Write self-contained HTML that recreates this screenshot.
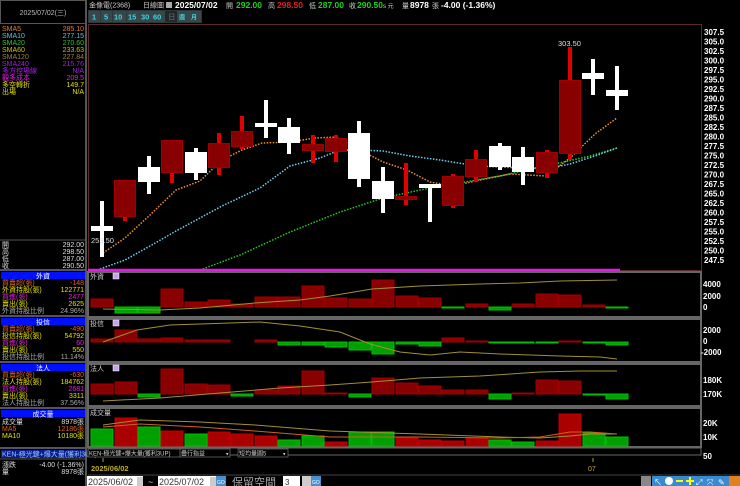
<!DOCTYPE html>
<html><head><meta charset="utf-8"><style>
body{margin:0;background:#000;width:740px;height:486px;overflow:hidden}
svg{display:block}
text{font-family:"Liberation Sans","Noto Sans CJK TC",sans-serif}
.s{font-size:7px}
.ax{font-size:8px;fill:#fff;font-weight:bold}
</style></head><body>
<svg width="740" height="486" viewBox="0 0 740 486" xmlns="http://www.w3.org/2000/svg">
<rect width="740" height="486" fill="#000"/>
<!-- left panel borders -->
<rect x="0.5" y="0.5" width="85" height="23" fill="none" stroke="#555"/>
<text x="43" y="15" class="s" fill="#bbb" text-anchor="middle">2025/07/02(三)</text>
<line x1="86" y1="0" x2="86" y2="486" stroke="#555" stroke-width="2"/>
<g class="s">
<text x="2" y="31" fill="#e08030">SMA5</text><text x="84" y="31" fill="#e08030" text-anchor="end">285.10</text>
<text x="2" y="38" fill="#60c0e0">SMA10</text><text x="84" y="38" fill="#60c0e0" text-anchor="end">277.15</text>
<text x="2" y="45" fill="#30c030">SMA20</text><text x="84" y="45" fill="#30c030" text-anchor="end">270.60</text>
<text x="2" y="52" fill="#d0c000">SMA60</text><text x="84" y="52" fill="#d0c000" text-anchor="end">233.63</text>
<text x="2" y="59" fill="#a08040">SMA120</text><text x="84" y="59" fill="#a08040" text-anchor="end">227.84</text>
<text x="2" y="66" fill="#a020d0">SMA240</text><text x="84" y="66" fill="#a020d0" text-anchor="end">215.76</text>
<text x="2" y="73" fill="#a020e0">多方控場線</text><text x="84" y="73" fill="#a020e0" text-anchor="end">N/A</text>
<text x="2" y="80" fill="#e020e0">觀多成本</text><text x="84" y="80" fill="#e020e0" text-anchor="end">209.5</text>
<text x="2" y="87" fill="#e0e000">多空轉折</text><text x="84" y="87" fill="#e0e000" text-anchor="end">149.7</text>
<text x="2" y="94" fill="#e0e000">出場</text><text x="84" y="94" fill="#e0e000" text-anchor="end">N/A</text>
</g>
<line x1="0" y1="240" x2="86" y2="240" stroke="#555"/>
<g class="s" fill="#ddd">
<text x="2" y="247">開</text><text x="84" y="247" text-anchor="end">292.00</text>
<text x="2" y="254">高</text><text x="84" y="254" text-anchor="end">298.50</text>
<text x="2" y="261">低</text><text x="84" y="261" text-anchor="end">287.00</text>
<text x="2" y="268">收</text><text x="84" y="268" text-anchor="end">290.50</text>
</g>
<line x1="0" y1="270" x2="86" y2="270" stroke="#555" stroke-width="2"/>
<!-- 外資 -->
<rect x="1" y="272" width="84" height="7" fill="#0010ff"/><text x="43" y="278.5" class="s" fill="#fff" text-anchor="middle">外資</text>
<g class="s">
<text x="2" y="285" fill="#e06020">買賣超(張)</text><text x="84" y="285" fill="#e06020" text-anchor="end">-148</text>
<text x="2" y="292" fill="#e0e000">外資持股(張)</text><text x="84" y="292" fill="#e0e000" text-anchor="end">122771</text>
<text x="2" y="299" fill="#e020e0">買進(張)</text><text x="84" y="299" fill="#e020e0" text-anchor="end">2477</text>
<text x="2" y="306" fill="#e0e000">賣出(張)</text><text x="84" y="306" fill="#e0e000" text-anchor="end">2625</text>
<text x="2" y="313" fill="#aaa">外資持股比例</text><text x="84" y="313" fill="#aaa" text-anchor="end">24.96%</text>
</g>
<line x1="0" y1="316" x2="86" y2="316" stroke="#555" stroke-width="2"/>
<rect x="1" y="318" width="84" height="7" fill="#0010ff"/><text x="43" y="324.5" class="s" fill="#fff" text-anchor="middle">投信</text>
<g class="s">
<text x="2" y="331" fill="#e06020">買賣超(張)</text><text x="84" y="331" fill="#e06020" text-anchor="end">-490</text>
<text x="2" y="338" fill="#e0e000">投信持股(張)</text><text x="84" y="338" fill="#e0e000" text-anchor="end">54792</text>
<text x="2" y="345" fill="#e020e0">買進(張)</text><text x="84" y="345" fill="#e020e0" text-anchor="end">60</text>
<text x="2" y="352" fill="#e0e000">賣出(張)</text><text x="84" y="352" fill="#e0e000" text-anchor="end">550</text>
<text x="2" y="359" fill="#aaa">投信持股比例</text><text x="84" y="359" fill="#aaa" text-anchor="end">11.14%</text>
</g>
<line x1="0" y1="362" x2="86" y2="362" stroke="#555" stroke-width="2"/>
<rect x="1" y="364" width="84" height="7" fill="#0010ff"/><text x="43" y="370.5" class="s" fill="#fff" text-anchor="middle">法人</text>
<g class="s">
<text x="2" y="377" fill="#e06020">買賣超(張)</text><text x="84" y="377" fill="#e06020" text-anchor="end">-630</text>
<text x="2" y="384" fill="#e0e000">法人持股(張)</text><text x="84" y="384" fill="#e0e000" text-anchor="end">184762</text>
<text x="2" y="391" fill="#e020e0">買進(張)</text><text x="84" y="391" fill="#e020e0" text-anchor="end">2681</text>
<text x="2" y="398" fill="#e0e000">賣出(張)</text><text x="84" y="398" fill="#e0e000" text-anchor="end">3311</text>
<text x="2" y="405" fill="#aaa">法人持股比例</text><text x="84" y="405" fill="#aaa" text-anchor="end">37.56%</text>
</g>
<line x1="0" y1="408" x2="86" y2="408" stroke="#555" stroke-width="2"/>
<rect x="1" y="410" width="84" height="7" fill="#0010ff"/><text x="43" y="416.5" class="s" fill="#fff" text-anchor="middle">成交量</text>
<g class="s">
<text x="2" y="424" fill="#ddd">成交量</text><text x="84" y="424" fill="#ddd" text-anchor="end">8978張</text>
<text x="2" y="431" fill="#e06020">MA5</text><text x="84" y="431" fill="#e06020" text-anchor="end">12186張</text>
<text x="2" y="438" fill="#e0e000">MA10</text><text x="84" y="438" fill="#e0e000" text-anchor="end">10180張</text>
</g>
<line x1="0" y1="448" x2="86" y2="448" stroke="#555" stroke-width="2"/>
<rect x="1" y="450" width="84" height="8" fill="#0a1a90"/><text x="2" y="456.5" class="s" fill="#9cf">KEN-極光鍵+爆大量(獲利3UP)</text>
<line x1="0" y1="459" x2="86" y2="459" stroke="#555"/>
<g class="s" fill="#ddd">
<text x="2" y="467">漲跌</text><text x="84" y="467" text-anchor="end">-4.00 (-1.36%)</text>
<text x="2" y="474">量</text><text x="84" y="474" text-anchor="end">8978張</text>
</g>

<!-- top bar -->
<text x="89" y="7.5" font-size="7" fill="#ccc">金像電(2368)</text>
<text x="143" y="7.5" font-size="7" fill="#ccc">日線圖</text>
<rect x="166" y="2" width="6" height="6" fill="#aaa"/>
<text x="175" y="8" font-size="8.5" font-weight="bold" fill="#fff">2025/07/02</text>
<text x="226" y="8" font-size="7" fill="#ccc">開</text><text x="236" y="8" font-size="8.5" font-weight="bold" fill="#20d020">292.00</text>
<text x="268" y="8" font-size="7" fill="#ccc">高</text><text x="277" y="8" font-size="8.5" font-weight="bold" fill="#e02020">298.50</text>
<text x="309" y="8" font-size="7" fill="#ccc">低</text><text x="318" y="8" font-size="8.5" font-weight="bold" fill="#20d020">287.00</text>
<text x="349" y="8" font-size="7" fill="#ccc">收</text><text x="357" y="8" font-size="8.5" font-weight="bold" fill="#20d020">290.50</text>
<text x="383" y="8" font-size="6" fill="#ccc">s 元</text>
<text x="402" y="8" font-size="7" fill="#ccc">量</text><text x="410" y="8" font-size="8.5" font-weight="bold" fill="#fff">8978</text>
<text x="432" y="8" font-size="7" fill="#ccc">張</text><text x="441" y="8" font-size="8.5" font-weight="bold" fill="#fff">-4.00 (-1.36%)</text>
<!-- buttons -->
<rect x="88" y="10" width="114" height="13" fill="#2a3a3a"/>
<g font-size="7.5" font-weight="bold" fill="#40d0e0">
<rect x="89" y="11" width="11" height="11" fill="#38484a"/><text x="92" y="19.5">1</text>
<rect x="101" y="11" width="11" height="11" fill="#38484a"/><text x="104" y="19.5">5</text>
<rect x="113" y="11" width="13" height="11" fill="#38484a"/><text x="114" y="19.5">10</text>
<rect x="127" y="11" width="13" height="11" fill="#38484a"/><text x="128" y="19.5">15</text>
<rect x="140" y="11" width="12" height="11" fill="#38484a"/><text x="141" y="19.5">30</text>
<rect x="152" y="11" width="13" height="11" fill="#38484a"/><text x="153" y="19.5">60</text>
<rect x="165" y="11" width="12" height="11" fill="#202828"/><text x="168" y="19.5" fill="#556">日</text>
<rect x="177" y="11" width="12" height="11" fill="#38484a"/><text x="179" y="19.5" font-size="6">週</text>
<rect x="189" y="11" width="12" height="11" fill="#38484a"/><text x="191" y="19.5" font-size="6">月</text>
</g>

<!-- main chart frame -->
<rect x="88.5" y="24.5" width="613" height="246" fill="none" stroke="#5a2a2a"/>
<g class="ax">
<text x="704" y="35">307.5</text><text x="704" y="44.5">305.0</text><text x="704" y="54">302.5</text><text x="704" y="63.5">300.0</text>
<text x="704" y="73">297.5</text><text x="704" y="82.5">295.0</text><text x="704" y="92">292.5</text><text x="704" y="101.5">290.0</text>
<text x="704" y="111">287.5</text><text x="704" y="120.5">285.0</text><text x="704" y="130">282.5</text><text x="704" y="139.5">280.0</text>
<text x="704" y="149">277.5</text><text x="704" y="158.5">275.0</text><text x="704" y="168">272.5</text><text x="704" y="177.5">270.0</text>
<text x="704" y="187">267.5</text><text x="704" y="196.5">265.0</text><text x="704" y="206">262.5</text><text x="704" y="215.5">260.0</text>
<text x="704" y="225">257.5</text><text x="704" y="234.5">255.0</text><text x="704" y="244">252.5</text><text x="704" y="253.5">250.0</text>
<text x="704" y="263">247.5</text>
</g>
<!-- MA lines -->
<polyline fill="none" stroke="#2c2" stroke-width="1.5" stroke-dasharray="1.5,1.5" points="200,270 240,255 290,232 340,212 383,198 420,190 453,184 500,176 546,166 590,156 617,148"/>
<polyline fill="none" stroke="#6cd0f0" stroke-width="1.5" stroke-dasharray="1.5,1.5" points="100,269 125,260 150,246 176,231 200,218 222,206 260,188 290,166 320,158 340,150 360,150 383,151 410,156 440,160 477,166 523,168 550,168 570,164 595,156 617,148"/>
<polyline fill="none" stroke="#f09030" stroke-width="1.5" stroke-dasharray="1.5,1.5" points="103,253 125,238 150,215 176,190 200,181 222,160 242,150 262,143 290,142 315,138 336,137 360,150 383,162 407,170 430,182 453,186 480,180 510,174 546,176 570,158 595,134 617,118"/>
<line x1="88" y1="270" x2="620" y2="270" stroke="#e020e0" stroke-width="2.5"/>
<!-- candles -->
<g fill="#fff">
<rect x="100" y="201" width="4" height="56"/><rect x="91" y="226" width="22" height="5"/>
<rect x="147" y="156" width="4" height="38"/><rect x="138" y="167" width="22" height="15"/>
<rect x="194" y="148" width="4" height="32"/><rect x="185" y="152" width="22" height="21"/>
<rect x="264" y="100" width="4" height="38"/><rect x="255" y="123" width="22" height="4"/>
<rect x="287" y="118" width="4" height="36"/><rect x="278" y="127" width="22" height="16"/>
<rect x="357" y="121" width="4" height="66"/><rect x="348" y="133" width="22" height="46"/>
<rect x="381" y="167" width="4" height="46"/><rect x="372" y="181" width="22" height="18"/>
<rect x="428" y="184" width="4" height="38"/><rect x="419" y="184" width="22" height="4"/>
<rect x="498" y="143" width="4" height="27"/><rect x="489" y="146" width="22" height="21"/>
<rect x="521" y="147" width="4" height="38"/><rect x="512" y="157" width="22" height="15"/>
<rect x="591" y="59" width="4" height="36"/><rect x="582" y="73" width="22" height="6"/>
<rect x="615" y="66" width="4" height="44"/><rect x="606" y="90" width="22" height="6"/>
</g>
<g fill="#e00000">
<rect x="123" y="180" width="4" height="41"/>
<rect x="170" y="140" width="4" height="43"/>
<rect x="217" y="133" width="4" height="42"/>
<rect x="240" y="116" width="4" height="33"/>
<rect x="311" y="135" width="4" height="28"/>
<rect x="334" y="135" width="4" height="27"/>
<rect x="404" y="163" width="4" height="42"/>
<rect x="451" y="174" width="4" height="34"/>
<rect x="474" y="150" width="4" height="32"/>
<rect x="545" y="150" width="4" height="28"/>
<rect x="568" y="47" width="4" height="113"/>
</g>
<g fill="#880000" stroke="#a00000" stroke-width="1">
<rect x="114.5" y="180.5" width="21" height="36"/>
<rect x="161.5" y="140.5" width="21" height="32"/>
<rect x="208.5" y="143.5" width="21" height="24"/>
<rect x="231.5" y="131.5" width="21" height="15"/>
<rect x="302.5" y="144.5" width="21" height="6"/>
<rect x="325.5" y="138.5" width="21" height="13"/>
<rect x="395.5" y="196.5" width="21" height="3"/>
<rect x="442.5" y="176.5" width="21" height="29"/>
<rect x="465.5" y="159.5" width="21" height="17"/>
<rect x="536.5" y="152.5" width="21" height="20"/>
<rect x="559.5" y="80.5" width="21" height="73"/>
</g>
<text x="91" y="243" font-size="7.5" fill="#ddd">253.50</text>
<text x="558" y="46" font-size="7.5" fill="#ddd">303.50</text>

<!-- sub panels frames -->
<g fill="none" stroke="#666" stroke-width="2">
<rect x="88" y="272" width="613" height="45"/>
<rect x="88" y="319" width="613" height="43"/>
<rect x="88" y="364" width="613" height="42"/>
<rect x="88" y="408" width="613" height="39"/>
</g>
<rect x="88" y="448" width="613" height="7" fill="none" stroke="#666" stroke-width="1"/>
<g class="s" fill="#ccc">
<text x="90" y="279">外資</text><text x="90" y="326">投信</text><text x="90" y="371">法人</text><text x="90" y="415">成交量</text>
</g>
<g fill="#c8a0f0" stroke="#fff" stroke-width="0.5">
<rect x="113" y="273" width="6" height="6"/><rect x="113" y="320" width="6" height="6"/><rect x="113" y="365" width="6" height="6"/>
</g>
<!-- 外資 bars zero 307 -->
<g stroke-width="1">
<g fill="#880000" stroke="#a00000">
<rect x="91" y="299" width="22" height="8"/><rect x="161" y="289" width="22" height="18"/><rect x="185" y="302" width="22" height="5"/>
<rect x="208" y="300" width="22" height="7"/><rect x="231" y="304" width="22" height="3"/><rect x="255" y="297" width="22" height="10"/>
<rect x="278" y="297" width="22" height="10"/><rect x="302" y="286" width="22" height="21"/><rect x="325" y="298" width="22" height="9"/>
<rect x="349" y="299" width="22" height="8"/><rect x="372" y="280" width="22" height="27"/><rect x="396" y="296" width="22" height="11"/>
<rect x="419" y="298" width="22" height="9"/><rect x="466" y="304" width="22" height="3"/><rect x="512" y="304" width="22" height="3"/>
<rect x="536" y="294" width="22" height="13"/><rect x="559" y="295" width="22" height="12"/><rect x="583" y="305" width="22" height="2"/>
</g>
<g fill="#00a000" stroke="#00c000">
<rect x="115" y="307" width="22" height="6"/><rect x="138" y="307" width="22" height="6"/><rect x="442" y="307" width="22" height="1"/>
<rect x="489" y="307" width="22" height="3"/><rect x="606" y="307" width="22" height="1"/>
</g>
</g>
<polyline fill="none" stroke="#a09030" stroke-width="1" points="103,309 160,310 200,308 255,303 300,300 330,296 372,289 420,286 480,284 520,283 560,281 617,280"/>
<!-- 投信 zero 342 -->
<g fill="#880000" stroke="#a00000">
<rect x="91" y="339" width="22" height="3"/><rect x="115" y="330" width="22" height="12"/><rect x="138" y="339" width="22" height="3"/>
<rect x="161" y="338" width="22" height="4"/><rect x="185" y="340" width="22" height="2"/><rect x="208" y="340" width="22" height="2"/>
<rect x="255" y="340" width="22" height="2"/><rect x="442" y="338" width="22" height="4"/><rect x="466" y="341" width="22" height="1"/>
<rect x="559" y="341" width="22" height="1"/>
</g>
<g fill="#00a000" stroke="#00c000">
<rect x="278" y="342" width="22" height="3"/><rect x="302" y="342" width="22" height="3"/><rect x="325" y="342" width="22" height="5"/>
<rect x="349" y="342" width="22" height="8"/><rect x="372" y="342" width="22" height="12"/><rect x="396" y="342" width="22" height="2"/>
<rect x="419" y="342" width="22" height="4"/><rect x="489" y="342" width="22" height="1"/><rect x="512" y="342" width="22" height="1"/>
<rect x="536" y="342" width="22" height="1"/><rect x="583" y="342" width="22" height="1"/><rect x="606" y="342" width="22" height="3"/>
</g>
<polyline fill="none" stroke="#a09030" stroke-width="1" points="103,342 137,330 170,325 230,323 260,322 300,326 340,332 370,344 400,352 430,355 460,352 500,354 560,356 600,357 617,359"/>
<!-- 法人 zero 394 -->
<g fill="#880000" stroke="#a00000">
<rect x="91" y="384" width="22" height="10"/><rect x="115" y="382" width="22" height="12"/><rect x="161" y="369" width="22" height="25"/>
<rect x="185" y="384" width="22" height="10"/><rect x="208" y="385" width="22" height="9"/><rect x="255" y="390" width="22" height="4"/>
<rect x="278" y="386" width="22" height="8"/><rect x="302" y="371" width="22" height="23"/><rect x="325" y="393" width="22" height="1"/>
<rect x="372" y="378" width="22" height="16"/><rect x="396" y="383" width="22" height="11"/><rect x="419" y="386" width="22" height="8"/>
<rect x="442" y="390" width="22" height="4"/><rect x="466" y="390" width="22" height="4"/><rect x="512" y="393" width="22" height="1"/>
<rect x="536" y="380" width="22" height="14"/><rect x="559" y="381" width="22" height="13"/>
</g>
<g fill="#00a000" stroke="#00c000">
<rect x="138" y="394" width="22" height="3"/><rect x="231" y="394" width="22" height="2"/><rect x="349" y="394" width="22" height="3"/>
<rect x="489" y="394" width="22" height="5"/><rect x="583" y="394" width="22" height="1"/><rect x="606" y="394" width="22" height="5"/>
</g>
<polyline fill="none" stroke="#a09030" stroke-width="1" points="103,401 160,398 220,393 280,388 330,385 372,382 420,378 480,376 540,372 580,371 617,371"/>
<!-- 成交量 base 446 -->
<g fill="#00a000" stroke="#00c000">
<rect x="91" y="429" width="22" height="17"/><rect x="138" y="427" width="22" height="19"/><rect x="185" y="434" width="22" height="12"/>
<rect x="278" y="440" width="22" height="6"/><rect x="302" y="436" width="22" height="10"/><rect x="349" y="432" width="22" height="14"/>
<rect x="372" y="432" width="22" height="14"/><rect x="489" y="440" width="22" height="6"/><rect x="512" y="442" width="22" height="4"/>
<rect x="583" y="433" width="22" height="13"/><rect x="606" y="437" width="22" height="9"/>
</g>
<g fill="#aa0000" stroke="#c00000">
<rect x="115" y="418" width="22" height="28"/><rect x="161" y="431" width="22" height="15"/><rect x="208" y="432" width="22" height="14"/>
<rect x="231" y="434" width="22" height="12"/><rect x="255" y="436" width="22" height="10"/><rect x="325" y="442" width="22" height="4"/>
<rect x="396" y="438" width="22" height="8"/><rect x="419" y="440" width="22" height="6"/><rect x="442" y="441" width="22" height="5"/>
<rect x="466" y="438" width="22" height="8"/><rect x="536" y="441" width="22" height="5"/><rect x="559" y="414" width="22" height="32"/>
</g>
<polyline fill="none" stroke="#a09030" stroke-width="1" points="103,425 140,420 200,422 255,425 330,431 420,434 500,437 540,438 570,436 590,434 617,434"/>
<polyline fill="none" stroke="#d06020" stroke-width="1" points="103,427 140,424 200,427 255,431 330,437 420,437 500,438 540,437 570,432 590,432 617,434"/>
<!-- sub axis labels -->
<g class="ax">
<text x="703" y="287">4000</text><text x="703" y="299">2000</text><text x="703" y="310">0</text>
<text x="703" y="333">2000</text><text x="703" y="344">0</text><text x="701" y="355">-2000</text>
<text x="703" y="383">180K</text><text x="703" y="397">170K</text>
<text x="703" y="426">20K</text><text x="703" y="440">10K</text><text x="703" y="459">50</text>
</g>
<!-- dropdown row -->
<rect x="88" y="449" width="92" height="8" fill="#000" stroke="#666" stroke-width="0.8"/>
<text x="89" y="455.5" font-size="6" fill="#ccc">KEN-極光鍵+爆大量(獲利3UP)</text>
<rect x="180" y="449" width="50" height="8" fill="#000" stroke="#666" stroke-width="0.8"/>
<text x="181" y="455.5" font-size="6" fill="#ccc">疊行指益</text><text x="226" y="455.5" font-size="5" fill="#ccc">▾</text>
<rect x="238" y="449" width="50" height="8" fill="#000" stroke="#666" stroke-width="0.8"/>
<text x="239" y="455.5" font-size="6" fill="#ccc">短均量圖5</text><text x="283" y="455.5" font-size="5" fill="#ccc">▾</text>
<line x1="103" y1="458" x2="103" y2="462" stroke="#aa0"/>
<text x="91" y="471" font-size="7.5" font-weight="bold" fill="#c0b020">2025/06/02</text>
<line x1="593" y1="458" x2="593" y2="462" stroke="#aa0"/>
<text x="588" y="471" font-size="7" fill="#c0b020">07</text>
<line x1="88" y1="475" x2="740" y2="475" stroke="#444"/>
<!-- bottom toolbar -->
<rect x="87" y="476" width="56" height="10" fill="#fff"/>
<text x="88" y="485" font-size="9" fill="#333">2025/06/02</text>
<rect x="137" y="477" width="6" height="9" fill="#ccc"/>
<text x="148" y="485" font-size="9" fill="#ccc">~</text>
<rect x="158" y="476" width="58" height="10" fill="#fff"/>
<text x="159" y="485" font-size="9" fill="#333">2025/07/02</text>
<rect x="210" y="477" width="6" height="9" fill="#ccc"/>
<rect x="216" y="476" width="10" height="10" fill="#4a90d0"/><text x="217" y="484" font-size="5" fill="#fff">GO</text>
<text x="232" y="486" font-size="11" fill="#aaa">保留空間</text>
<rect x="283" y="476" width="17" height="10" fill="#fff"/><text x="285" y="485" font-size="8" fill="#333">3</text>
<rect x="302" y="476" width="9" height="10" fill="#ccc"/>
<rect x="311" y="476" width="10" height="10" fill="#4a90d0"/><text x="312" y="484" font-size="5" fill="#fff">GO</text>
<rect x="641" y="476" width="10" height="10" fill="#888"/>
<rect x="652" y="476" width="88" height="10" fill="#3a8ad0"/>
<g fill="#fff" font-size="8">
<text x="654" y="485">↖</text><circle cx="669" cy="481" r="4" fill="#fff"/><rect x="676" y="480" width="7" height="2" fill="#ff0"/>
<rect x="686" y="480" width="8" height="2" fill="#ff0"/><rect x="689" y="477" width="2" height="8" fill="#ff0"/>
<text x="696" y="485">⤢</text><text x="707" y="485">⤧</text><text x="718" y="485">✎</text>
</g>
<rect x="729" y="476" width="11" height="10" fill="#e08020"/>
</svg>
</body></html>
